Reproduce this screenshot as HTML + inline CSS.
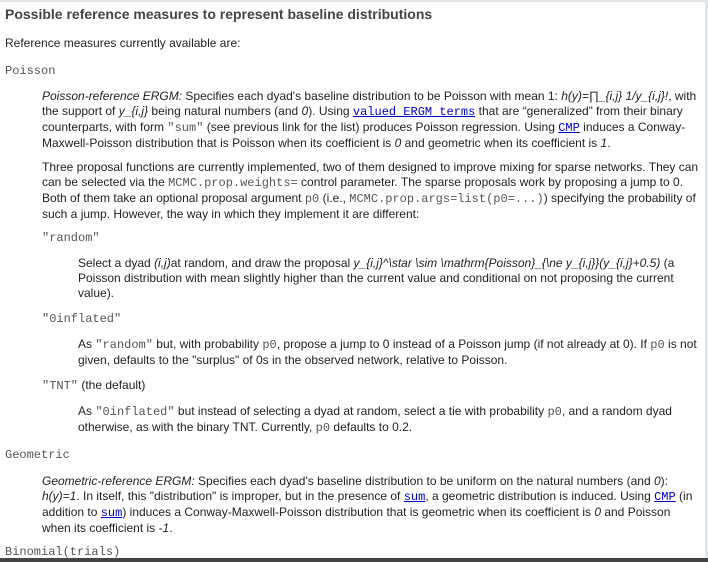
<!DOCTYPE html>
<html><head><meta charset="utf-8"><style>
html,body{margin:0;padding:0;background:#fff;}
body{width:708px;height:562px;position:relative;overflow:hidden;font-family:"Liberation Sans",Arial,sans-serif;font-size:12px;color:#222;}
.b{position:absolute;line-height:15px;white-space:nowrap;letter-spacing:0px}
.m{font-family:"Liberation Mono","Courier New",monospace;font-size:12px;letter-spacing:0;color:#555}
a{color:#00c;text-decoration:underline}
a.m{color:#00c}
i{font-style:italic}
</style></head><body>
<div style="position:absolute;left:0;top:0;width:708px;height:2px;background:#e3e6ea"></div>
<div style="position:absolute;left:705px;top:0;width:3px;height:562px;background:#e3e6ea"></div>
<div style="position:absolute;left:0;top:558px;width:708px;height:4px;background:#444"></div>
<div class="b" style="left:5px;top:7px;font-size:14px;font-weight:bold;color:#444">Possible reference measures to represent baseline distributions</div>
<div class="b" style="left:5px;top:36px">Reference measures currently available are:</div>
<div class="b m" style="left:5px;top:64px">Poisson</div>
<div class="b" style="left:42px;top:89px"><i>Poisson-reference ERGM:</i> Specifies each dyad's baseline distribution to be Poisson with mean 1: <i>h(y)=∏_{i,j} 1/y_{i,j}!</i>, with<br>the support of <i>y_{i,j}</i> being natural numbers (and <i>0</i>). Using <a class="m">valued ERGM terms</a> that are “generalized” from their binary<br>counterparts, with form <span class="m">"sum"</span> (see previous link for the list) produces Poisson regression. Using <a class="m">CMP</a> induces a Conway-<br>Maxwell-Poisson distribution that is Poisson when its coefficient is <i>0</i> and geometric when its coefficient is <i>1</i>.</div>
<div class="b" style="left:42px;top:160px">Three proposal functions are currently implemented, two of them designed to improve mixing for sparse networks. They can<br>can be selected via the <span class="m">MCMC.prop.weights=</span> control parameter. The sparse proposals work by proposing a jump to 0.<br>Both of them take an optional proposal argument <span class="m">p0</span> (i.e., <span class="m">MCMC.prop.args=list(p0=...)</span>) specifying the probability of<br>such a jump. However, the way in which they implement it are different:</div>
<div class="b m" style="left:42px;top:231px">"random"</div>
<div class="b" style="left:78px;top:256px">Select a dyad <i>(i,j)</i>at random, and draw the proposal <i>y_{i,j}^\star \sim \mathrm{Poisson}_{\ne y_{i,j}}(y_{i,j}+0.5)</i> (a<br>Poisson distribution with mean slightly higher than the current value and conditional on not proposing the current<br>value).</div>
<div class="b m" style="left:42px;top:312px">"0inflated"</div>
<div class="b" style="left:78px;top:337px">As <span class="m">"random"</span> but, with probability <span class="m">p0</span>, propose a jump to 0 instead of a Poisson jump (if not already at 0). If <span class="m">p0</span> is not<br>given, defaults to the "surplus" of 0s in the observed network, relative to Poisson.</div>
<div class="b" style="left:42px;top:378px"><span class="m">"TNT"</span> (the default)</div>
<div class="b" style="left:78px;top:404px">As <span class="m">"0inflated"</span> but instead of selecting a dyad at random, select a tie with probability <span class="m">p0</span>, and a random dyad<br>otherwise, as with the binary TNT. Currently, <span class="m">p0</span> defaults to 0.2.</div>
<div class="b m" style="left:5px;top:448px">Geometric</div>
<div class="b" style="left:42px;top:474px"><i>Geometric-reference ERGM:</i> Specifies each dyad's baseline distribution to be uniform on the natural numbers (and <i>0</i>):<br><i>h(y)=1</i>. In itself, this "distribution" is improper, but in the presence of <a class="m">sum</a>, a geometric distribution is induced. Using <a class="m">CMP</a> (in<br>addition to <a class="m">sum</a>) induces a Conway-Maxwell-Poisson distribution that is geometric when its coefficient is <i>0</i> and Poisson<br>when its coefficient is <i>-1</i>.</div>
<div class="b m" style="left:5px;top:545px">Binomial(trials)</div>
</body></html>
